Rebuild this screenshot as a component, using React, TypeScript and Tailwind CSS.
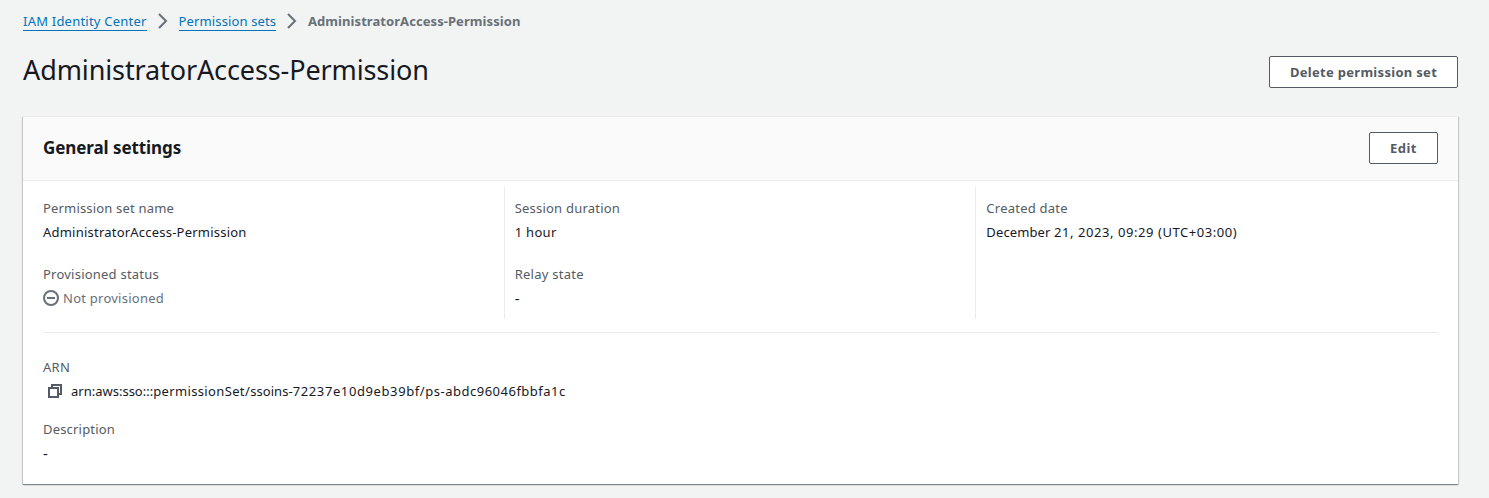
import type { ReactNode } from "react";

function Chevron() {
  return (
    <svg className="mx-2 size-4 shrink-0" viewBox="0 0 16 16" fill="none" stroke="#687078" strokeWidth="2">
      <path d="M4 1l7 7-7 7" />
    </svg>
  );
}

function CopyIcon() {
  return (
    <svg className="mr-2 size-4 shrink-0" viewBox="0 0 16 16" fill="none" stroke="#545b64" strokeWidth="2">
      <path d="M2 5h9v9H2z" />
      <path d="M5 5V2h9v9h-3" />
    </svg>
  );
}

function StoppedIcon() {
  return (
    <svg className="size-4 shrink-0" viewBox="0 0 16 16" fill="none" stroke="#687078" strokeWidth="2">
      <circle cx="8" cy="8" r="7" />
      <path d="M4 8h8" />
    </svg>
  );
}

function Field({ label, tracking, children }: { label: string; tracking: string; children: ReactNode }) {
  return (
    <div className="leading-6">
      <div className={`text-[#545b64] ${tracking}`}>{label}</div>
      <div className="flex h-6 items-center">{children}</div>
    </div>
  );
}

function Empty() {
  return <span className="text-[15px]">-</span>;
}

export default function App() {
  return (
    <div className="h-[498px] overflow-hidden bg-[#f2f3f3] pr-[31px] pl-[23px] font-['Noto_Sans',sans-serif] text-[13px] whitespace-nowrap text-[#16191f]">
      <nav className="flex h-[42px] items-center leading-[18px]">
        <a className="mt-[1px] w-[123.5px] border-b border-[#0073bb] tracking-[0.22px] text-[#0073bb]">IAM Identity Center</a>
        <Chevron />
        <a className="mt-[1px] w-[97.5px] border-b border-[#0073bb] tracking-[0.14px] text-[#0073bb]">Permission sets</a>
        <Chevron />
        <span className="font-bold tracking-[0.07px] text-[#687078]">AdministratorAccess-Permission</span>
      </nav>

      <header className="flex h-[74px] items-start justify-between">
        <h1 className="mt-[10px] text-[27px] leading-9 tracking-[-0.11px]">AdministratorAccess-Permission</h1>
        <button className="mt-[14px] h-8 w-[189px] rounded-[2px] border border-[#545b64] bg-white pt-[2px] font-bold tracking-[0.3px] text-[#545b64]">
          Delete permission set
        </button>
      </header>

      <section className="h-[368px] border-t border-[#eaeded] bg-white shadow-[0_1px_1px_0_rgba(0,28,36,0.3),1px_1px_1px_0_rgba(0,28,36,0.15),-1px_1px_1px_0_rgba(0,28,36,0.15)]">
        <div className="flex h-16 items-start justify-between border-b border-[#eaeded] bg-[#fafafa] px-5 pt-[15px]">
          <h2 className="text-[17px] leading-8 font-bold tracking-[-0.08px]">General settings</h2>
          <button className="h-8 w-[69px] rounded-[2px] border border-[#545b64] bg-white pt-[2px] font-bold tracking-[0.5px] text-[#545b64]">
            Edit
          </button>
        </div>

        <div className="mx-[10px] mt-[6px] grid h-[132px] grid-cols-3">
          <div className="flex flex-col gap-[18px] border-r border-[#eaeded] px-[10px] pt-[9px]">
            <Field label="Permission set name" tracking="tracking-[0.178px]">
              <span className="tracking-[0.22px]">AdministratorAccess-Permission</span>
            </Field>
            <Field label="Provisioned status" tracking="tracking-[0.227px]">
              <span className="flex items-center gap-1 tracking-[0.247px] text-[#687078]">
                <StoppedIcon />
                Not provisioned
              </span>
            </Field>
          </div>
          <div className="flex flex-col gap-[18px] border-r border-[#eaeded] px-[10px] pt-[9px]">
            <Field label="Session duration" tracking="tracking-[0.22px]">
              <span className="tracking-[0.3px]">1 hour</span>
            </Field>
            <Field label="Relay state" tracking="tracking-[0.27px]">
              <Empty />
            </Field>
          </div>
          <div className="px-[10px] pt-[9px]">
            <Field label="Created date" tracking="tracking-[0.24px]">
              <span className="tracking-[0.56px]">
                <span className="tracking-[0.12px]">December </span>21, 2023, 09:29 (UTC+03:00)
              </span>
            </Field>
          </div>
        </div>

        <div className="mx-5 mt-[13px] flex flex-col gap-[14px] border-t border-[#eaeded] pt-[22px]">
          <Field label="ARN" tracking="tracking-[0.3px]">
            <span className="ml-1 flex items-center">
              <CopyIcon />
              <span>
                arn:aws:sso:::<span className="tracking-[0.358px]">permissionSet/</span>
                <span className="tracking-[0.07px]">ssoins-</span>
                <span className="tracking-[0.6px]">72237e10d9eb39bf/</span>
                <span className="tracking-[0.5px]">ps-abdc96046fbbfa1c</span>
              </span>
            </span>
          </Field>
          <Field label="Description" tracking="tracking-[0.186px]">
            <Empty />
          </Field>
        </div>
      </section>
    </div>
  );
}
